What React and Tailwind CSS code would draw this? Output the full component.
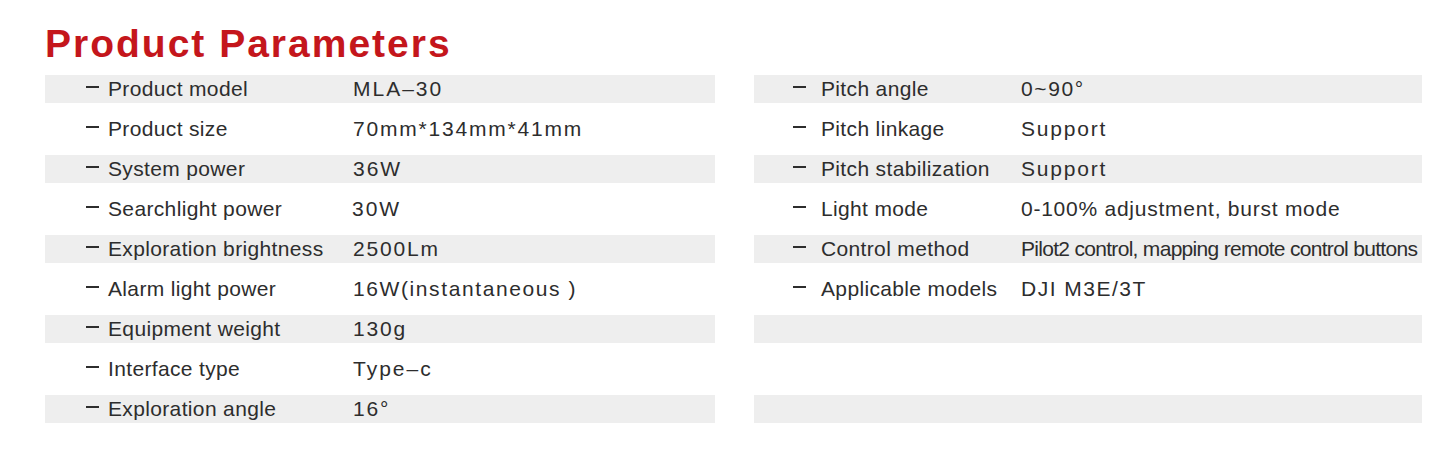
import React from "react";

// left table: label / value / tracking for the value
const leftRows = [
  { label: "Product model", value: "MLA–30", vt: "tracking-[2px]" },
  { label: "Product size", value: "70mm*134mm*41mm", vt: "tracking-[1.8px]" },
  { label: "System power", value: "36W", vt: "tracking-[2px]" },
  { label: "Searchlight power", value: "30W", vt: "tracking-[2px] -ml-[1px]" },
  { label: "Exploration brightness", value: "2500Lm", vt: "tracking-[1.8px]" },
  { label: "Alarm light power", value: "16W(instantaneous )", vt: "tracking-[1.6px]" },
  { label: "Equipment weight", value: "130g", vt: "tracking-[1.8px]" },
  { label: "Interface type", value: "Type–c", vt: "tracking-[2px]" },
  { label: "Exploration angle", value: "16°", vt: "tracking-[1.8px]" },
];

const rightRows = [
  { label: "Pitch angle", value: "0~90°", vt: "tracking-[1.6px]" },
  { label: "Pitch linkage", value: "Support", vt: "tracking-[1.8px]" },
  { label: "Pitch stabilization", value: "Support", vt: "tracking-[1.8px]" },
  { label: "Light mode", value: "0-100% adjustment, burst mode", vt: "tracking-[0.75px]" },
  { label: "Control method", value: "Pilot2 control, mapping remote control buttons", vt: "text-[19px] tracking-[-0.7px]" },
  { label: "Applicable models", value: "DJI M3E/3T", vt: "tracking-[1.5px]" },
  null,
  null,
  null,
];

function Row({ row, shaded, side }) {
  const isLeft = side === "left";
  return (
    <div className="h-[40px] flex items-center">
      <div
        className={
          "h-[28px] w-full flex items-center " + (shaded ? "bg-[#eeeeee]" : "")
        }
      >
        {row && (
          <>
            <span
              className={
                "block shrink-0 h-[2px] w-[13px] bg-[#2d2d2d] -translate-y-[2px] " +
                (isLeft ? "ml-[41px] mr-[9px]" : "ml-[39px] mr-[15px]")
              }
            ></span>
            <span
              className={
                "shrink-0 text-[21px] tracking-[0.35px] whitespace-nowrap " +
                (isLeft ? "w-[245px]" : "w-[200px]")
              }
            >
              {row.label}
            </span>
            <span className={"text-[21px] whitespace-nowrap " + row.vt}>
              {row.value}
            </span>
          </>
        )}
      </div>
    </div>
  );
}

export default function App() {
  return (
    <div className="w-[1445px] h-[454px] bg-white font-['Liberation_Sans',Arial,sans-serif] text-[#2d2d2d] pl-[45px] pt-[24px]">
      {/* title */}
      <h1 className="text-[39px] leading-[39px] font-bold text-[#c4161c] tracking-[2px]">
        Product Parameters
      </h1>

      {/* two tables */}
      <div className="flex gap-[39px] mt-[6px]">
        <div className="w-[670px]">
          {leftRows.map((r, i) => (
            <Row key={i} row={r} shaded={i % 2 === 0} side="left" />
          ))}
        </div>
        <div className="w-[668px]">
          {rightRows.map((r, i) => (
            <Row key={i} row={r} shaded={i % 2 === 0} side="right" />
          ))}
        </div>
      </div>
    </div>
  );
}
